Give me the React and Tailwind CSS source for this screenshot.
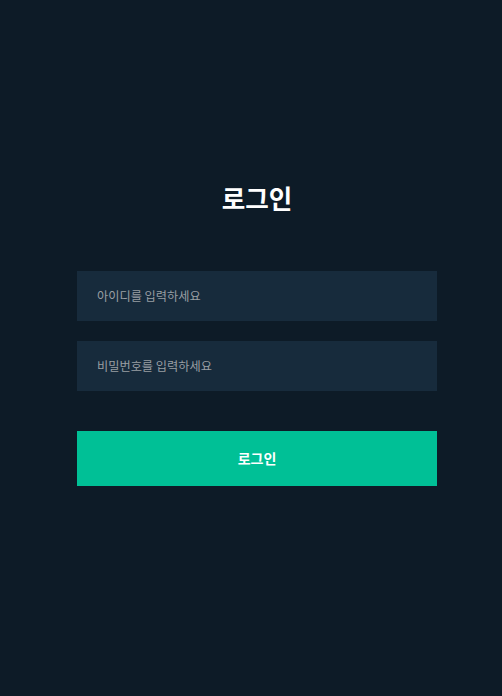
export default function App() {
  return (
    <div
      className="min-h-screen w-full bg-[#0d1b27] flex justify-center pl-[12px]"
      style={{ fontFamily: '"Noto Sans CJK KR", "Noto Sans", sans-serif' }}
    >
      <div className="w-[360px] pt-[182px] flex flex-col">
        <h1 className="text-[25.6px] leading-[32px] font-bold text-white text-center">로그인</h1>
        <input
          type="text"
          placeholder="아이디를 입력하세요"
          className="mt-[57px] h-[50px] w-full bg-[#172b3c] px-5 text-[12.2px] text-white placeholder:text-[#999ea3] outline-none"
        />
        <input
          type="password"
          placeholder="비밀번호를 입력하세요"
          className="mt-5 h-[50px] w-full bg-[#172b3c] px-5 text-[12.2px] text-white placeholder:text-[#999ea3] outline-none"
        />
        <button className="mt-10 h-[55px] w-full bg-[#00c096] text-white text-[14px] font-bold">
          로그인
        </button>
      </div>
    </div>
  );
}
